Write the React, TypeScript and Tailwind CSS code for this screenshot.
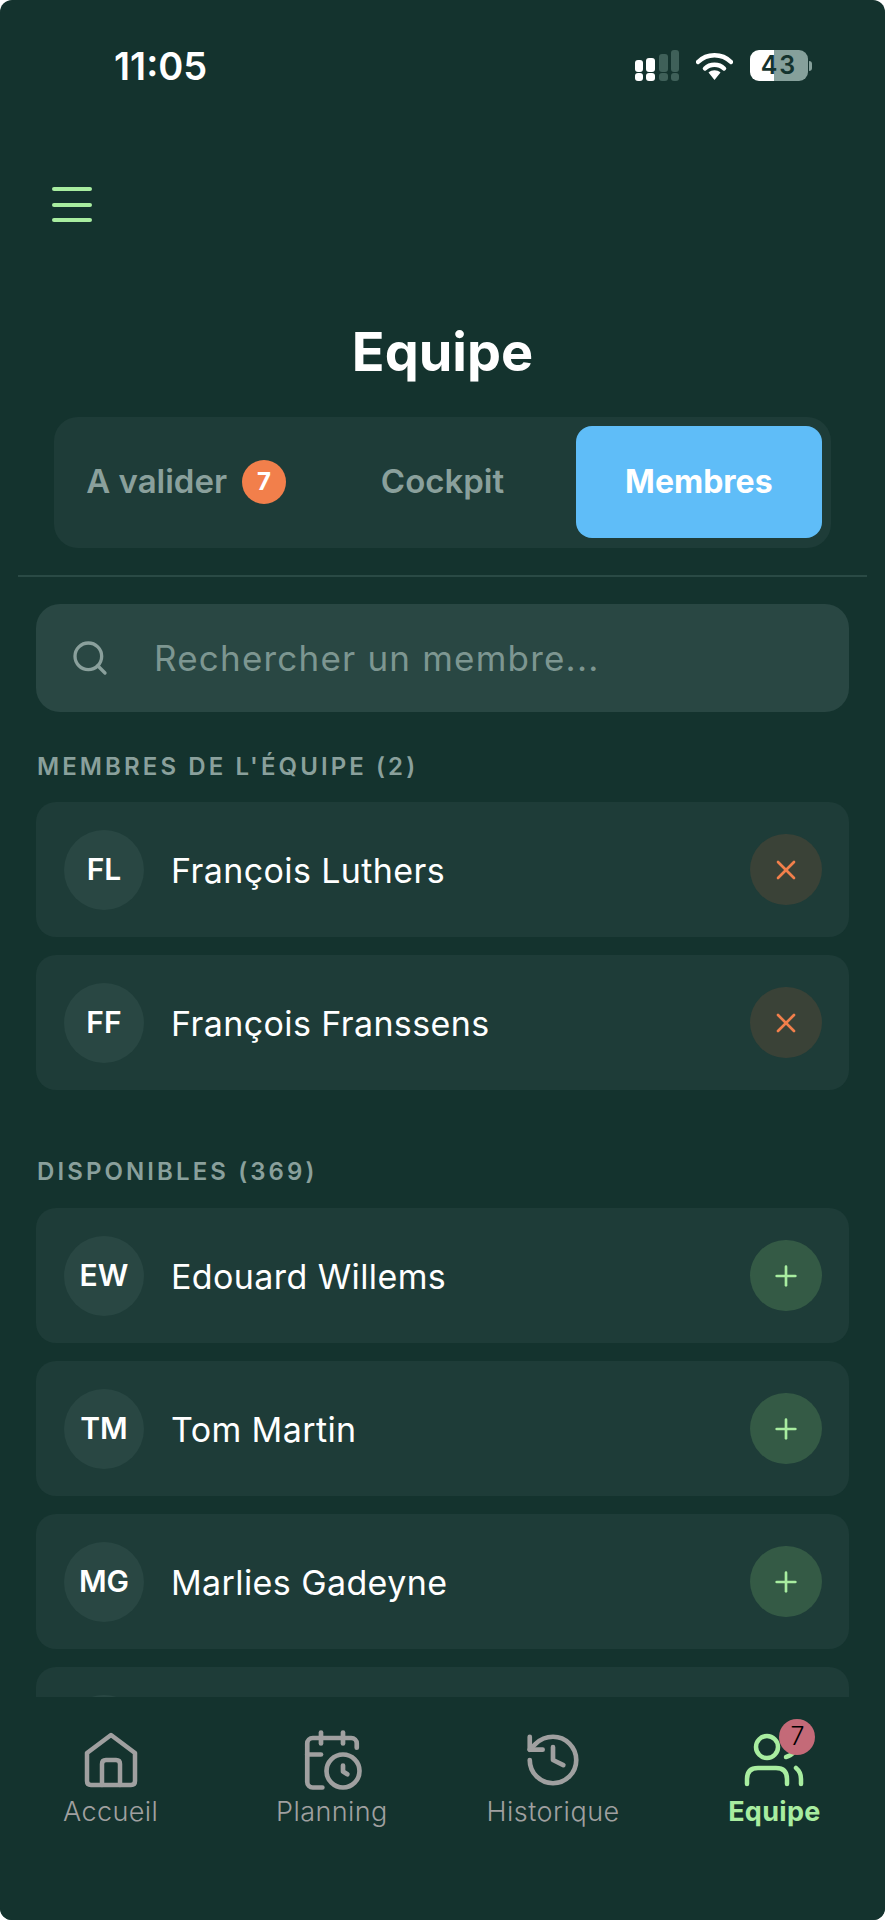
import { Search, X, Plus, CalendarClock, History } from 'lucide-react'

const TEAM = [
  { initials: 'FL', name: 'François Luthers' },
  { initials: 'FF', name: 'François Franssens' },
]

const AVAILABLE = [
  { initials: 'EW', name: 'Edouard Willems' },
  { initials: 'TM', name: 'Tom Martin' },
  { initials: 'MG', name: 'Marlies Gadeyne' },
  { initials: 'AB', name: '' },
]

function MemberRow({ initials, name, added }: { initials: string; name: string; added: boolean }) {
  return (
    <div className="flex h-[135px] shrink-0 items-center rounded-[20px] bg-[#1e3c38] pl-[28px] pr-[27px]">
      <div className="flex h-[80px] w-[80px] items-center justify-center rounded-full bg-[#294743] text-[30px] font-semibold text-white">
        {name && initials}
      </div>
      <div className="mt-[1px] ml-[27px] flex-1 text-[34px] font-normal tracking-[0.4px] text-white">{name}</div>
      {name && (
        <button
          className={`flex h-[71px] w-[72px] items-center justify-center rounded-full ${
            added ? 'bg-[#3a4237]' : 'bg-[#345a45]'
          }`}
        >
          {added ? (
            <X className="h-[32px] w-[32px] text-[#f27f4b]" strokeWidth={2} />
          ) : (
            <Plus className="h-[32px] w-[32px] text-[#a8eda0]" strokeWidth={2} />
          )}
        </button>
      )}
    </div>
  )
}

function StatusIcons() {
  return (
    <div className="flex items-center">
      <svg width="44" height="31" viewBox="0 0 44 31">
        <rect x="0" y="10" width="8" height="12" rx="3" fill="#fff" />
        <rect x="11" y="8" width="9" height="14" rx="3" fill="#fff" />
        <rect x="0" y="23" width="8" height="8" rx="3" fill="#fff" />
        <rect x="11" y="23" width="9" height="8" rx="3" fill="#fff" />
        <rect x="24" y="4" width="9" height="18" rx="3" fill="#3f6059" />
        <rect x="36" y="0" width="8" height="22" rx="3" fill="#3f6059" />
        <rect x="24" y="23" width="9" height="8" rx="3" fill="#3f6059" />
        <rect x="36" y="23" width="8" height="8" rx="3" fill="#3f6059" />
      </svg>
      <svg width="37" height="28" viewBox="0 0 37 28" className="ml-[17px]">
        <path d="M2 10 C 11 1, 26 1, 35 10" fill="none" stroke="#fff" strokeWidth="4.5" strokeLinecap="round" />
        <path d="M9 16.5 C 14 11.5, 23 11.5, 28 16.5" fill="none" stroke="#fff" strokeWidth="4.5" strokeLinecap="round" />
        <path d="M12.5 20.5 C 16 17.5, 21 17.5, 24.5 20.5 L 18.5 28 Z" fill="#fff" />
      </svg>
      <div className="ml-[17px] flex items-center">
        <div className="flex h-[31px] w-[58px] items-center justify-center rounded-[9px] bg-[linear-gradient(90deg,#ffffff_0%,#ffffff_41%,#86a09b_41%,#86a09b_100%)] text-[25px] leading-none font-semibold tracking-[2px] text-[#14332e]">
          43
        </div>
        <div className="ml-[1px] h-[10px] w-[3px] rounded-r-full bg-[#86a09b]" />
      </div>
    </div>
  )
}

function HomeIcon() {
  return (
    <svg width="54" height="56" viewBox="0 0 54 56" fill="none" stroke="#a0a0a0" strokeWidth="4.5" strokeLinejoin="round" strokeLinecap="round">
      <path d="M3 21 L27 3 L51 21 V49 Q51 53 47 53 H7 Q3 53 3 49 Z" />
      <path d="M18 53 V32 Q18 28 22 28 H32 Q36 28 36 32 V53" />
    </svg>
  )
}

function TeamIcon() {
  return (
    <svg width="60" height="54" viewBox="0 0 60 54" fill="none" stroke="#a8eda0" strokeWidth="4.5" strokeLinecap="round">
      <circle cx="23" cy="14" r="11" />
      <path d="M3 51 V46 Q3 35 14 35 H32 Q43 35 43 46 V51" />
      <path d="M52 35 Q57 39 57 46 V51" />
      <path d="M42 24 Q47 23 50 19" />
    </svg>
  )
}

export default function App() {
  return (
    <div className="flex h-[1920px] w-[885px] flex-col overflow-hidden rounded-[12px] bg-[#14332e] font-['Inter',sans-serif]">
      {/* Status bar */}
      <div className="flex h-[132px] shrink-0 items-start justify-between pt-[44px] pl-[114px] pr-[73px]">
        <span className="text-[38px] leading-[44px] font-semibold text-white">11:05</span>
        <div className="pt-[6px]">
          <StatusIcons />
        </div>
      </div>

      {/* Menu */}
      <div className="flex h-[185px] shrink-0 flex-col gap-[11.5px] pt-[55px] pl-[52px]">
        <div className="h-[4px] w-[40px] rounded-full bg-[#a8eda0]" />
        <div className="h-[4px] w-[40px] rounded-full bg-[#a8eda0]" />
        <div className="h-[4px] w-[40px] rounded-full bg-[#a8eda0]" />
      </div>

      <h1 className="shrink-0 text-center text-[54px] leading-[70px] font-bold text-white">Equipe</h1>

      {/* Tabs */}
      <div className="mx-[54px] mt-[30px] grid h-[131px] shrink-0 grid-cols-3 items-center gap-[10px] rounded-[24px] bg-[#1e3c38] pt-[9px] pr-[9px] pb-[10px] pl-[9px]">
        <div className="flex items-center justify-center gap-[15px] text-[33px] font-semibold text-[#8aa09c]">
          A valider
          <span className="flex h-[44px] w-[44px] items-center justify-center rounded-full bg-[#f27f4b] text-[24px] font-bold text-white">
            7
          </span>
        </div>
        <div className="flex justify-center text-[33px] font-semibold text-[#8aa09c]">Cockpit</div>
        <div className="flex h-[112px] items-center justify-center rounded-[16px] bg-[#5fbdf8] text-[32px] font-bold text-white">
          Membres
        </div>
      </div>

      <div className="mx-[18px] mt-[27px] h-[2px] shrink-0 bg-[#2a4a45]" />

      {/* List */}
      <div className="flex min-h-0 flex-1 flex-col overflow-hidden px-[36px] pt-[27px]">
        <div className="flex h-[108px] shrink-0 items-center rounded-[24px] bg-[#294743] pl-[34px]">
          <Search className="h-[40px] w-[40px] text-[#8aa09c]" strokeWidth={2} />
          <span className="ml-[44px] text-[35px] tracking-[1.2px] text-[#7d9691]">Rechercher un membre...</span>
        </div>

        <div className="mt-[40px] mb-[20px] ml-[1px] text-[24px] leading-[30px] font-semibold tracking-[3.1px] text-[#8aa09c]">
          MEMBRES DE L'ÉQUIPE (2)
        </div>
        <div className="flex flex-col gap-[18px]">
          {TEAM.map((m) => (
            <MemberRow key={m.initials} {...m} added />
          ))}
        </div>

        <div className="mt-[67px] mb-[21px] ml-[1px] text-[24px] leading-[30px] font-semibold tracking-[3.1px] text-[#8aa09c]">
          DISPONIBLES (369)
        </div>
        <div className="flex flex-col gap-[18px]">
          {AVAILABLE.map((m) => (
            <MemberRow key={m.initials} {...m} added={false} />
          ))}
        </div>
      </div>

      {/* Bottom nav */}
      <nav className="grid h-[223px] shrink-0 grid-cols-4 bg-[#14332e] pt-[33px]">
        <div className="flex flex-col items-center">
          <div className="flex h-[60px] items-center"><HomeIcon /></div>
          <span className="mt-[2px] text-[27px] font-light tracking-[0.4px] text-[#a0a0a0]">Accueil</span>
        </div>
        <div className="flex flex-col items-center">
          <div className="flex h-[60px] items-center">
            <CalendarClock className="h-[66px] w-[66px] text-[#a0a0a0]" strokeWidth={1.7} />
          </div>
          <span className="mt-[2px] text-[27px] font-light tracking-[0.4px] text-[#a0a0a0]">Planning</span>
        </div>
        <div className="flex flex-col items-center">
          <div className="flex h-[60px] items-center">
            <History className="h-[62px] w-[62px] text-[#a0a0a0]" strokeWidth={1.8} />
          </div>
          <span className="mt-[2px] text-[27px] font-light tracking-[0.5px] text-[#a0a0a0]">Historique</span>
        </div>
        <div className="flex flex-col items-center">
          <div className="relative flex h-[60px] items-center">
            <TeamIcon />
            <span className="absolute -top-[11px] -right-[11px] flex h-[36px] w-[36px] items-center justify-center rounded-full bg-[#c46a78] text-[25px] font-light text-black">
              7
            </span>
          </div>
          <span className="mt-[2px] text-[27px] font-bold tracking-[0.3px] text-[#a8eda0]">Equipe</span>
        </div>
      </nav>
    </div>
  )
}
